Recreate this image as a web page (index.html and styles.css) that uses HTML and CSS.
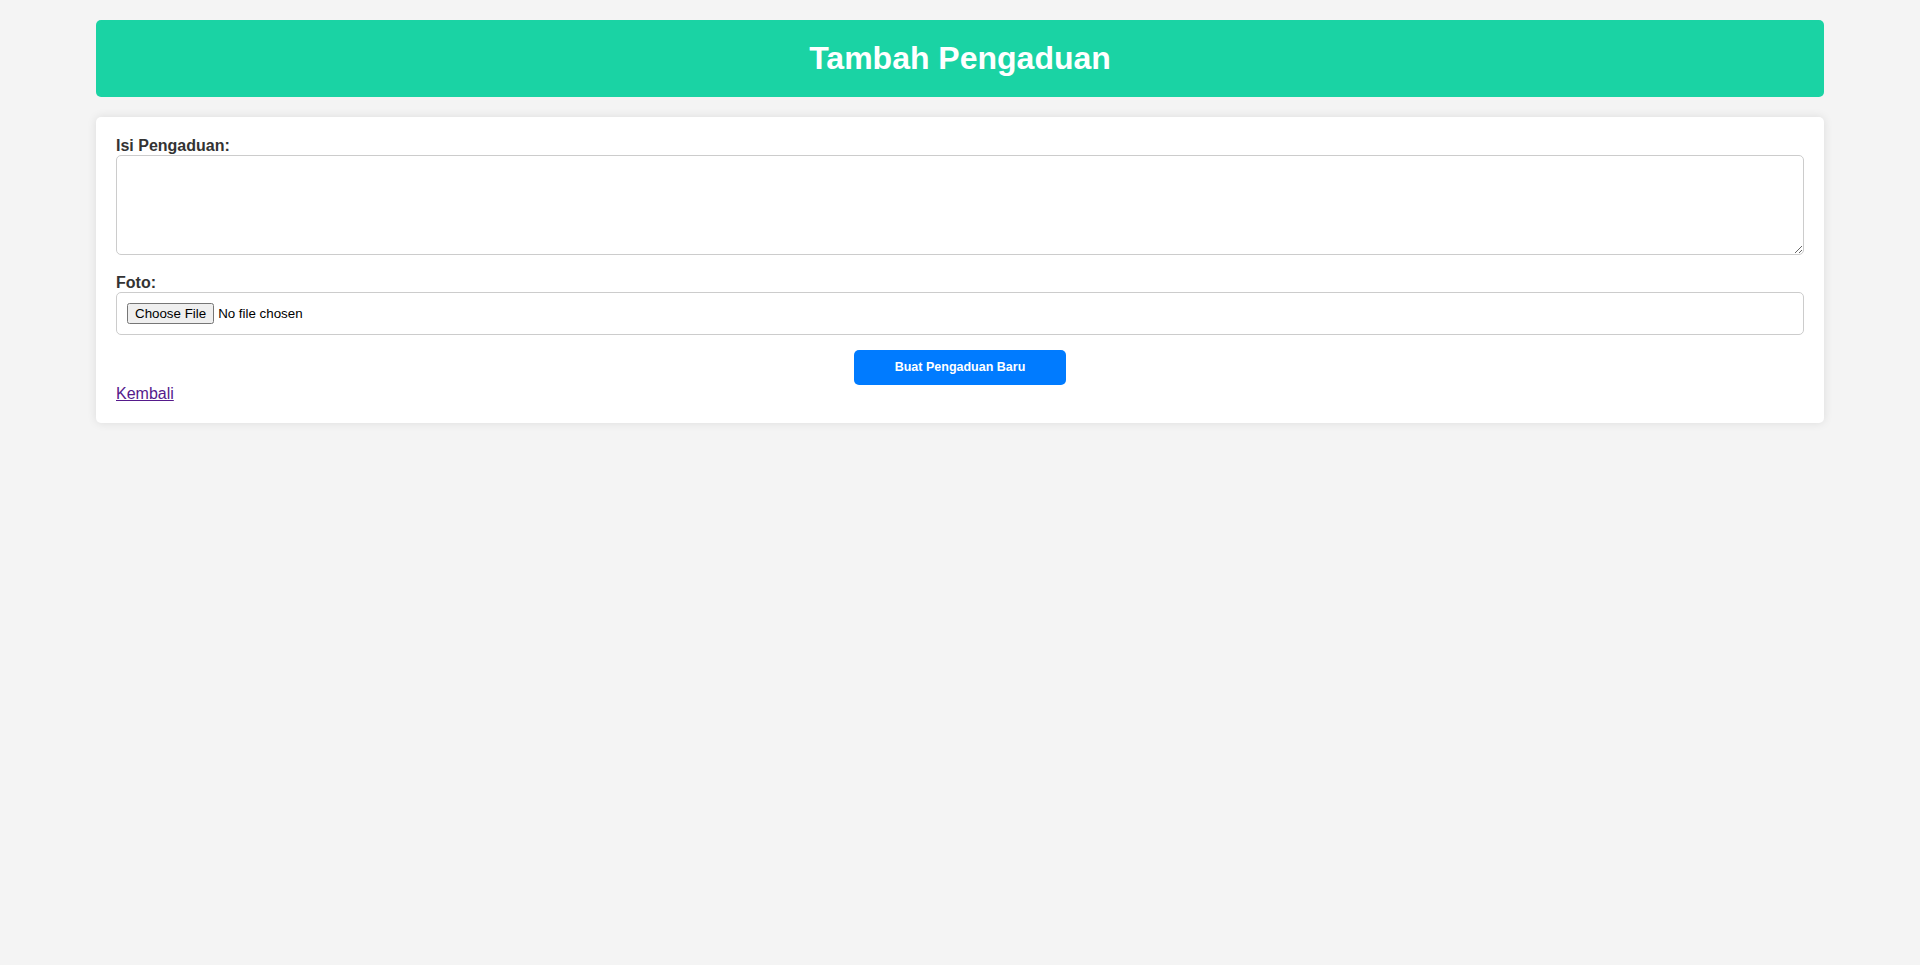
FILE: index.html
```html
<!DOCTYPE html>
<html lang="id">
<head>
<meta charset="utf-8">
<title>Tambah Pengaduan</title>
<link rel="stylesheet" href="styles.css">
</head>
<body>
<div class="container">
  <header class="page-header">
    <h1 class="page-title">Tambah Pengaduan</h1>
  </header>
  <main class="card">
    <form class="form">
      <label class="form-label" for="isi">Isi Pengaduan:</label>
      <textarea class="form-textarea" id="isi" name="isi"></textarea>
      <label class="form-label" for="foto">Foto:</label>
      <input class="form-file" type="file" id="foto" name="foto">
      <button class="btn-submit" type="button">Buat Pengaduan Baru</button>
    </form>
    <a class="back-link" href="#">Kembali</a>
  </main>
</div>
</body>
</html>
```

FILE: styles.css
```css
* { box-sizing: border-box; }

body {
  margin: 0;
  background: #f4f4f4;
  font-family: "Liberation Sans", Arial, sans-serif;
  font-size: 16px;
  color: #333;
}

.container {
  width: 90%;
  margin: 20px auto;
}

.page-header {
  background: #1ad3a4;
  color: #fff;
  padding: 20px;
  text-align: center;
  border-radius: 5px;
}

.page-title {
  margin: 0;
  font-size: 32px;
  line-height: 37px;
  font-weight: bold;
}

.card {
  display: block;
  margin-top: 20px;
  background: #fff;
  padding: 20px;
  border-radius: 5px;
  box-shadow: 0 0 10px rgba(0, 0, 0, 0.1);
}

.form {
  display: flex;
  flex-direction: column;
}

.form-label {
  font-weight: bold;
  line-height: 18px;
  color: #333;
}

.form-textarea {
  width: 100%;
  height: 100px;
  padding: 10px;
  border: 1px solid #ccc;
  border-radius: 5px;
  margin: 0 0 19px;
  font-family: "Liberation Mono", monospace;
  font-size: 13px;
  resize: vertical;
}

.form-file {
  width: 100%;
  height: 43px;
  padding: 10px;
  border: 1px solid #ccc;
  border-radius: 5px;
  margin: 0 0 15px;
  font-family: "Liberation Sans", Arial, sans-serif;
  font-size: 13.333px;
  color: #000;
}

.btn-submit {
  align-self: center;
  width: 212px;
  background: #007bff;
  color: #fff;
  border: none;
  border-radius: 5px;
  padding: 10px 0;
  font-family: "Liberation Sans", Arial, sans-serif;
  font-size: 12.5px;
  line-height: 15px;
  font-weight: bold;
  cursor: pointer;
}

.back-link {
  display: inline-block;
  color: #551a8b;
  line-height: 18px;
  text-decoration: underline;
}
```
